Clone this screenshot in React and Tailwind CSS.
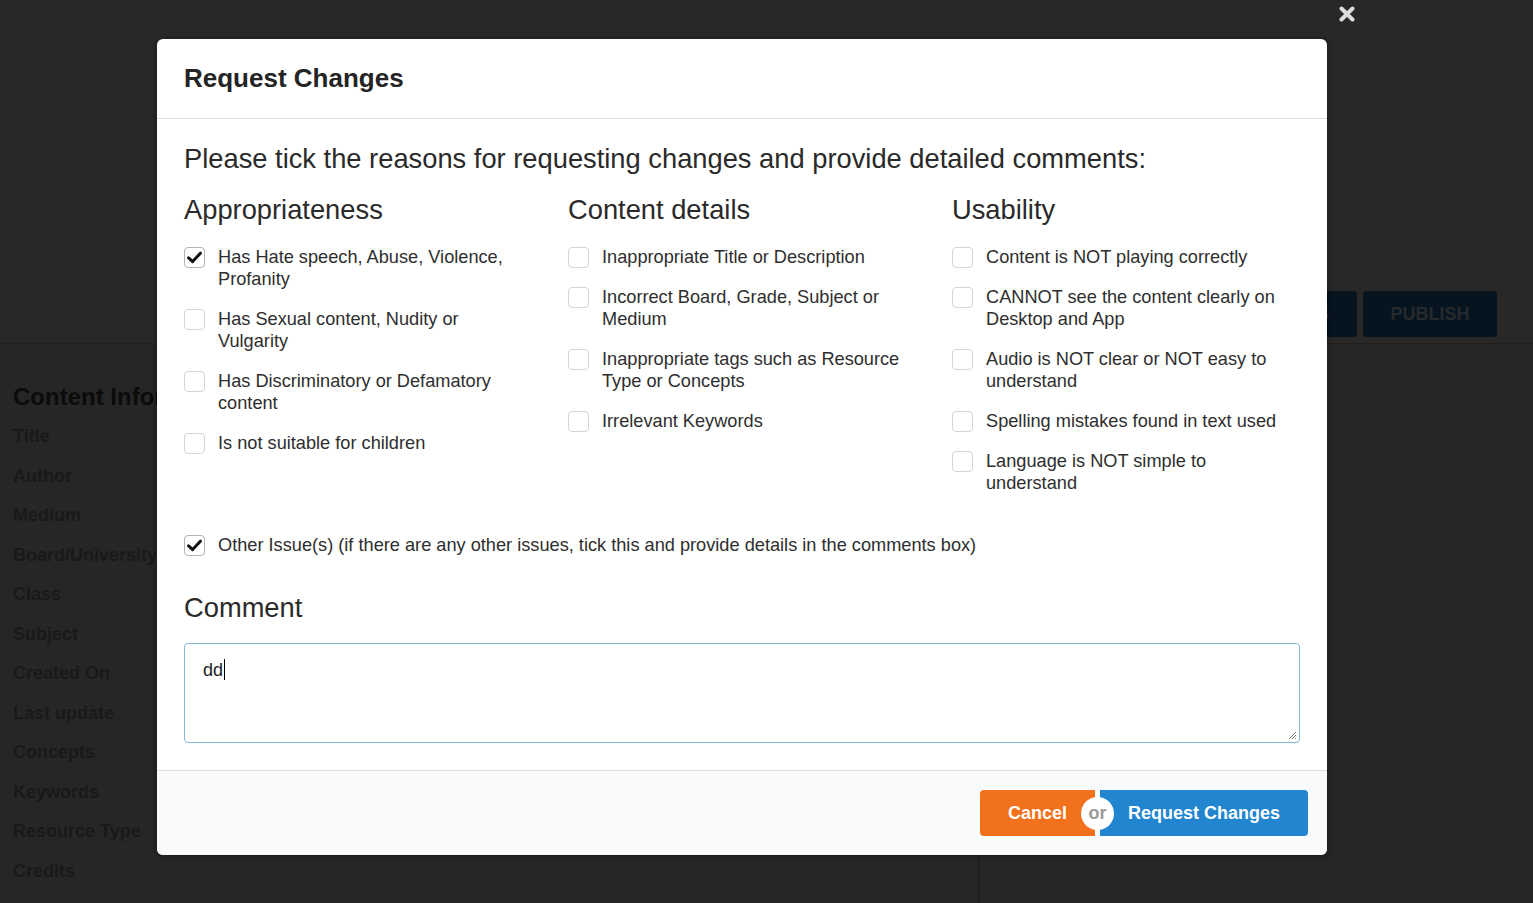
import React from "react";

const labels = [
  "Title",
  "Author",
  "Medium",
  "Board/University",
  "Class",
  "Subject",
  "Created On",
  "Last update",
  "Concepts",
  "Keywords",
  "Resource Type",
  "Credits",
];

const columns = [
  {
    title: "Appropriateness",
    items: [
      { lines: ["Has Hate speech, Abuse, Violence,", "Profanity"], checked: true },
      { lines: ["Has Sexual content, Nudity or", "Vulgarity"] },
      { lines: ["Has Discriminatory or Defamatory", "content"] },
      { lines: ["Is not suitable for children"] },
    ],
  },
  {
    title: "Content details",
    items: [
      { lines: ["Inappropriate Title or Description"] },
      { lines: ["Incorrect Board, Grade, Subject or", "Medium"] },
      { lines: ["Inappropriate tags such as Resource", "Type or Concepts"] },
      { lines: ["Irrelevant Keywords"] },
    ],
  },
  {
    title: "Usability",
    items: [
      { lines: ["Content is NOT playing correctly"] },
      { lines: ["CANNOT see the content clearly on", "Desktop and App"] },
      { lines: ["Audio is NOT clear or NOT easy to", "understand"] },
      { lines: ["Spelling mistakes found in text used"] },
      { lines: ["Language is NOT simple to", "understand"] },
    ],
  },
];

function Box({ checked }) {
  return (
    <span
      className={
        "mt-[0.5px] flex h-[21px] w-[21px] shrink-0 items-center justify-center rounded-[4px] border bg-white " +
        (checked ? "border-[#b3b3b3]" : "border-[#d4d4d5]")
      }
    >
      {checked && (
        <svg width="15" height="13" viewBox="0 0 15 13">
          <path d="M1.6 6.8 L5.6 10.6 L13.4 2.2" fill="none" stroke="#111" strokeWidth="3" strokeLinecap="round" strokeLinejoin="round" />
        </svg>
      )}
    </span>
  );
}

function Item({ lines, checked }) {
  return (
    <div className="flex gap-[13px]">
      <Box checked={checked} />
      <div className="whitespace-nowrap text-[18.2px] leading-[22px] text-[#2e2e2e]">
        {lines.map((l, i) => (
          <div key={i}>{l}</div>
        ))}
      </div>
    </div>
  );
}

export default function App() {
  return (
    <div className="relative h-[903px] w-full overflow-hidden bg-[#262626] font-['Liberation_Sans',Arial,sans-serif]">
      {/* dimmed page behind the modal */}
      <div className="flex h-[344px] items-end justify-end gap-[6px] border-b border-[#202020] bg-[#282828] pb-[6px] pr-[36px]">
        <div className="flex h-[46px] items-center rounded-[4px] bg-[#06141f] px-[28px] text-[18px] font-bold text-[#262a2d]">
          REQUEST CHANGES
        </div>
        <div className="flex h-[46px] w-[134px] items-center justify-center rounded-[4px] bg-[#06141f] text-[18px] font-bold text-[#262a2d]">
          PUBLISH
        </div>
      </div>
      <div className="flex h-[559px]">
        <div className="w-[980px] border-r-2 border-[#1e1e1e] pl-[13px] pt-[38px]">
          <div className="text-[24px] font-bold leading-[30px] text-[#0b0b0b]">Content Information</div>
          <div className="mt-[5px]">
            {labels.map((l) => (
              <div key={l} className="flex h-[39.5px] items-center text-[18px] font-bold text-[#191919]">
                {l}
              </div>
            ))}
          </div>
        </div>
        <div className="flex-1" />
      </div>

      {/* close icon */}
      <svg className="absolute right-[178px] top-[6px]" width="16" height="16" viewBox="0 0 16 16">
        <path d="M2.5 2.5 L13.5 13.5 M13.5 2.5 L2.5 13.5" stroke="#dcdcdc" strokeWidth="4" strokeLinecap="round" />
      </svg>

      {/* modal */}
      <div className="absolute left-[157px] top-[39px] w-[1170px] overflow-hidden rounded-[6px] bg-white shadow-[0_1px_6px_rgba(0,0,0,0.4)]">
        <div className="flex h-[80px] items-center border-b border-[#e0e0e0] px-[27px] text-[26px] font-bold text-[#242424]">
          Request Changes
        </div>
        <div className="px-[27px] pb-[27px] pt-[25px] text-[#2a2a2a]">
          <div className="text-[27.3px] leading-[30px]">
            Please tick the reasons for requesting changes and provide detailed comments:
          </div>
          <div className="mt-[21px] grid grid-cols-[384px_384px_1fr]">
            {columns.map((c) => (
              <div key={c.title}>
                <div className="text-[27.3px] leading-[30px]">{c.title}</div>
                <div className="mt-[21px] flex flex-col gap-[18px]">
                  {c.items.map((it, i) => (
                    <Item key={i} lines={it.lines} checked={it.checked} />
                  ))}
                </div>
              </div>
            ))}
          </div>
          <div className="mt-[40px]">
            <Item lines={["Other Issue(s) (if there are any other issues, tick this and provide details in the comments box)"]} checked />
          </div>
          <div className="mt-[37px] text-[27.3px] leading-[30px]">Comment</div>
          <div className="relative mt-[20px] h-[100px] rounded-[4px] border border-[#85b7d9] px-[18px] pt-[11px] text-[18px] leading-[23px] text-[#1e1e1e]">
            <span>dd</span>
            <span className="ml-[0.5px] inline-block h-[21px] w-[1px] translate-y-[4px] bg-black" />
            <svg className="absolute bottom-[2px] right-[2px]" width="10" height="10" viewBox="0 0 10 10">
              <path d="M9 2 L2 9 M9 5 L5 9 M9 8 L8 9" stroke="#777" strokeWidth="1" />
            </svg>
          </div>
        </div>
        <div className="flex justify-end border-t border-[#dedede] bg-[#f9fafb] py-[19px] pr-[19px]">
          <div className="relative flex">
            <div className="flex h-[46px] w-[115px] items-center justify-center rounded-l-[4px] bg-[#f2711c] text-[18px] font-bold text-white">
              Cancel
            </div>
            <div className="w-[5px]" />
            <div className="flex h-[46px] w-[208px] items-center justify-center rounded-r-[4px] bg-[#2185d0] text-[18px] font-bold text-white">
              Request Changes
            </div>
            <div className="absolute left-[101px] top-[7px] flex h-[33px] w-[33px] items-center justify-center rounded-full bg-white text-[18px] font-bold text-[#9a9a9a]">
              or
            </div>
          </div>
        </div>
      </div>
    </div>
  );
}
